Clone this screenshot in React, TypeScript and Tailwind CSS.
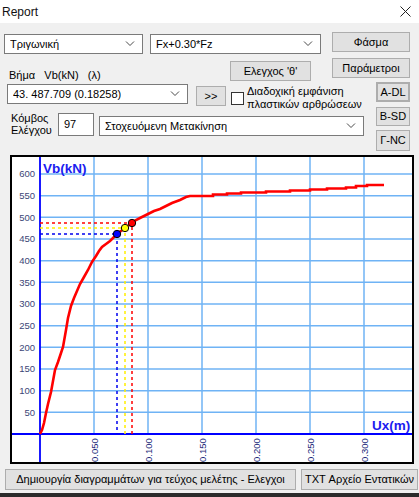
import React from "react";

const FONT = { fontFamily: '"Liberation Sans", Arial, sans-serif' };

function Chevron() {
  return (
    <svg width="10" height="6" viewBox="0 0 10 6" className="shrink-0">
      <path d="M1 0.5 L5 4.5 L9 0.5" fill="none" stroke="#4a4a4a" strokeWidth="1" />
    </svg>
  );
}

function Combo({ text, className }: { text: string; className: string }) {
  return (
    <div className={`flex h-[20px] items-center justify-between border border-[#7a7a7a] bg-white pl-[5px] pr-[7px] ${className}`}>
      <span className="truncate">{text}</span>
      <Chevron />
    </div>
  );
}

function Btn({ children, className }: { children: React.ReactNode; className: string }) {
  return (
    <div className={`flex items-center justify-center border border-[#adadad] bg-[#e1e1e1] ${className}`}>
      {children}
    </div>
  );
}

// chart coords are page coords; svg viewBox starts at inner frame corner
const X0 = 40;
const Y0 = 434;
const gx = [94, 148, 202, 256, 310, 364];
const gy = Array.from({ length: 12 }, (_, i) => Y0 - 21.67 * (i + 1));
const xLabels = ["0.050", "0.100", "0.150", "0.200", "0.250", "0.300"];

const curve: [number, number][] = [
  [40, 434], [42, 430], [44, 423], [46, 413], [48, 404], [51, 392], [53, 381], [55, 370],
  [58, 362], [61, 353], [63, 347], [66, 330], [68, 318], [71, 306], [74, 298], [77, 291],
  [80, 284], [84, 277], [88, 270], [92, 262], [96, 256], [99, 251], [102, 247], [106, 244],
  [110, 241], [113, 238], [117, 234], [121, 231], [125, 228], [129, 225], [132, 223],
  [136, 220], [140, 218], [144, 216], [148, 214], [154, 211], [160, 209], [166, 206],
  [172, 203], [180, 200], [186, 197], [190, 196], [213, 196], [213, 194.5], [227, 194.5],
  [227, 193.5], [241, 193.5], [241, 192.5], [266, 192.5], [266, 191.5], [290, 191.5],
  [290, 190.5], [310, 190.5], [310, 189.5], [327, 189.5], [327, 188.5], [346, 188.5],
  [346, 187.5], [356, 187.5], [356, 186], [367, 186], [367, 185], [384, 185],
];

function Chart() {
  const grid = "#6fb3f5";
  return (
    <svg width="400" height="305" viewBox="12 157 400 305" style={FONT}>
      <rect x="12" y="157" width="400" height="305" fill="#fff" />
      {gx.map((x) => (
        <line key={x} x1={x} y1={157} x2={x} y2={Y0} stroke={grid} strokeWidth="1.5" />
      ))}
      {gy.map((y) => (
        <line key={y} x1={X0} y1={y} x2={412} y2={y} stroke={grid} strokeWidth="1.5" />
      ))}
      <line x1={X0} y1={157} x2={X0} y2={462} stroke="#0000ff" strokeWidth="1.8" />
      <line x1={12} y1={Y0} x2={412} y2={Y0} stroke="#0000ff" strokeWidth="1.8" />
      {gy.map((y, i) => (
        <text key={i} x={35} y={y + 3.5} fontSize="9.5" textAnchor="end" fill="#3b4676">
          {(i + 1) * 50}
        </text>
      ))}
      {gx.map((x, i) => (
        <text
          key={x}
          x={x + 3.5}
          y={462}
          fontSize="9.5"
          fill="#1d2a7a"
          transform={`rotate(-90 ${x + 3.5} 462)`}
        >
          {xLabels[i]}
        </text>
      ))}
      <text x={43} y={173} fontSize="13.5" fontWeight="bold" fill="#1c1cf0">Vb(kN)</text>
      <text x={372} y={430} fontSize="13.5" fontWeight="bold" fill="#1c1cf0">Ux(m)</text>

      <g strokeWidth="1.5" strokeDasharray="3 3" fill="none">
        <polyline points={`${X0},223 132,223 132,${Y0}`} stroke="#ff0000" />
        <polyline points={`${X0},228 125,228 125,${Y0}`} stroke="#ffee00" />
        <polyline points={`${X0},234 117,234 117,${Y0}`} stroke="#0000ee" />
      </g>
      <polyline
        points={curve.map((p) => p.join(",")).join(" ")}
        fill="none"
        stroke="#ff0000"
        strokeWidth="2.6"
        strokeLinejoin="miter"
      />
      <circle cx={117} cy={234} r={3.7} fill="#0000ff" stroke="#000" strokeWidth="1" />
      <circle cx={125} cy={228} r={3.7} fill="#ffff00" stroke="#000" strokeWidth="1" />
      <circle cx={132} cy={223} r={3.7} fill="#ff0000" stroke="#000" strokeWidth="1" />
    </svg>
  );
}

export default function App() {
  return (
    <div className="flex h-[497px] w-[419px] flex-col overflow-hidden bg-[#f0f0f0] text-[11px] text-black" style={FONT}>
      {/* title bar */}
      <div className="flex h-[23px] shrink-0 items-center justify-between bg-white pl-[2px] pr-[8px]">
        <span className="text-[12px] text-[#111]">Report</span>
        <svg width="11" height="11" viewBox="0 0 11 11">
          <path d="M0.5 0.5 L10.5 10.5 M10.5 0.5 L0.5 10.5" stroke="#222" strokeWidth="1" />
        </svg>
      </div>

      {/* row 1 */}
      <div className="mt-[9px] flex h-[22px] items-start">
        <Combo text="Τριγωνική" className="ml-[4px] mt-[2px] w-[139px]" />
        <Combo text="Fx+0.30*Fz" className="ml-[7px] mt-[2px] w-[171px]" />
        <Btn className="ml-[11px] h-[20px] w-[78px]">Φάσμα</Btn>
      </div>

      {/* row 2 */}
      <div className="flex h-[28px] items-start">
        <span className="mt-[13px] w-[230px] pl-[9px] whitespace-pre">Βήμα   Vb(kN)   (λ)</span>
        <Btn className="mt-[7px] h-[20px] w-[81px]">Ελεγχος 'θ'</Btn>
        <Btn className="ml-[21px] mt-[4px] h-[20px] w-[78px]">Παράμετροι</Btn>
      </div>

      {/* rows 3-4 with the A-DL / B-SD / Γ-NC column */}
      <div className="flex h-[73px]">
        <div className="flex w-[376px] flex-col">
          <div className="mt-[2px] flex h-[24px] items-start">
            <Combo text="43. 487.709 (0.18258)" className="ml-[7px] w-[181px]" />
            <Btn className="ml-[8px] mt-[2px] h-[20px] w-[30px]">&gt;&gt;</Btn>
            <div className="ml-[5px] mt-[8px] h-[13px] w-[13px] border border-[#333] bg-white" />
            <div className="ml-[3px] mt-[1px] leading-[13px]">
              <div>Διαδοχική εμφάνιση</div>
              <div>πλαστικών αρθρώσεων</div>
            </div>
          </div>
          <div className="flex items-start">
            <div className="ml-[11px] mt-[4px] w-[40px] leading-[12px]">
              <div>Κόμβος</div>
              <div>Ελέγχου</div>
            </div>
            <div className="ml-[7px] mt-[5px] flex h-[23px] w-[36px] items-center border border-[#7a7a7a] bg-white pl-[5px]">97</div>
            <Combo text="Στοχευόμενη Μετακίνηση" className="ml-[5px] mt-[8px] w-[265px]" />
          </div>
        </div>
        <div className="flex flex-col">
          <Btn className="h-[20px] w-[34px] border-2 border-[#0078d7]">A-DL</Btn>
          <Btn className="mt-[5px] h-[19px] w-[34px]">B-SD</Btn>
          <Btn className="mt-[4px] h-[21px] w-[34px]">Γ-NC</Btn>
        </div>
      </div>

      {/* chart */}
      <div className="ml-[10px] h-[309px] w-[404px] border-2 border-black bg-white">
        <Chart />
      </div>

      {/* bottom buttons */}
      <div className="mt-[5px] flex">
        <Btn className="ml-[5px] h-[21px] w-[291px]">Δημιουργία διαγραμμάτων για τεύχος μελέτης - Ελεγχοι</Btn>
        <Btn className="ml-[5px] h-[21px] w-[117px]">TXT Αρχείο Εντατικών</Btn>
      </div>
      <div className="mt-auto h-[4px] bg-[#2b2b2b]" />
    </div>
  );
}
